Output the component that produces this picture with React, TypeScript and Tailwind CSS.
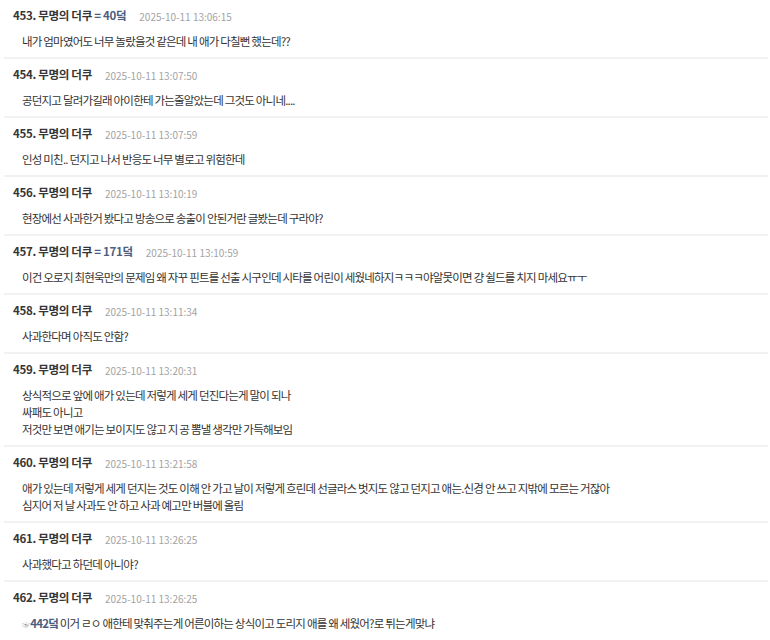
import React from "react";

type Item = {
  no: number;
  count?: string;
  time: string;
  lines: React.ReactNode[];
};

const items: Item[] = [
  { no: 453, count: "40덬", time: "2025-10-11 13:06:15", lines: ["내가 엄마였어도 너무 놀랐을것 같은데 내 애가 다칠뻔 했는데??"] },
  { no: 454, time: "2025-10-11 13:07:50", lines: ["공던지고 달려가길래 아이한테 가는줄알았는데 그것도 아니네...."] },
  { no: 455, time: "2025-10-11 13:07:59", lines: ["인성 미친.. 던지고 나서 반응도 너무 별로고 위험한데"] },
  { no: 456, time: "2025-10-11 13:10:19", lines: ["현장에선 사과한거 봤다고 방송으로 송출이 안된거란 글봤는데 구라야?"] },
  {
    no: 457,
    count: "171덬",
    time: "2025-10-11 13:10:59",
    lines: ["이건 오로지 최현욱만의 문제임 왜 자꾸 핀트를 선출 시구인데 시타를 어린이 세웠네하지ㅋㅋㅋ야알못이면 걍 쉴드를 치지 마세요ㅠㅜ"],
  },
  { no: 458, time: "2025-10-11 13:11:34", lines: ["사과한다며 아직도 안함?"] },
  {
    no: 459,
    time: "2025-10-11 13:20:31",
    lines: [
      "상식적으로 앞에 애가 있는데 저렇게 세게 던진다는게 말이 되나",
      "싸패도 아니고",
      "저것만 보면 애기는 보이지도 않고 지 공 뽐낼 생각만 가득해보임",
    ],
  },
  {
    no: 460,
    time: "2025-10-11 13:21:58",
    lines: [
      "애가 있는데 저렇게 세게 던지는 것도 이해 안 가고 날이 저렇게 흐린데 선글라스 벗지도 않고 던지고 애는.신경 안 쓰고 지밖에 모르는 거잖아",
      "심지어 저 날 사과도 안 하고 사과 예고만 버블에 올림",
    ],
  },
  { no: 461, time: "2025-10-11 13:26:25", lines: ["사과했다고 하던데 아니야?"] },
  {
    no: 462,
    time: "2025-10-11 13:26:25",
    lines: [
      <>
        <span className="text-[9px] text-[#8a8a8a]">☞</span>
        <span className="font-bold text-[#4e5d80]">442덬</span> 이거 ㄹㅇ 애한테 맞춰주는게 어른이하는 상식이고 도리지 애를 왜 세웠어?로 튀는게맞냐
      </>,
    ],
  },
];

function Comment({ item }: { item: Item }) {
  return (
    <div className="border-b-2 border-[#f2f2f2] pt-[7px] pb-[7px]">
      <div className="flex items-center h-[18px] pl-[9px]">
        <span className="text-[11.5px] font-bold text-[#363636] tracking-[-0.3px]">
          {item.no}. 무명의 더쿠
          {item.count && <span className="text-[#4e5d80]"> = {item.count}</span>}
        </span>
        <span className="ml-[13px] text-[10px] text-[#a3a3a3]">{item.time}</span>
      </div>
      <div className="mt-[8px] pl-[18px] text-[11.5px] leading-[17px] text-[#333333] tracking-[-0.8px]">
        {item.lines.map((l, i) => (
          <div key={i} className="whitespace-nowrap">
            {l}
          </div>
        ))}
      </div>
    </div>
  );
}

export default function App() {
  return (
    <div className="w-[770px] h-[640px] overflow-hidden bg-white font-['Noto_Sans_CJK_KR','Noto_Sans',sans-serif]">
      <div className="pl-[4px] pr-[2px]">
        {items.map((it) => (
          <Comment key={it.no} item={it} />
        ))}
      </div>
    </div>
  );
}
